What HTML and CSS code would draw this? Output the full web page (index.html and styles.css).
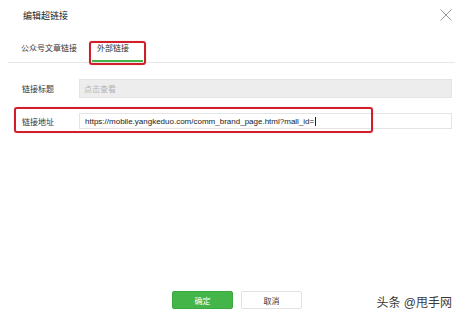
FILE: index.html
```html
<!DOCTYPE html>
<html lang="zh-CN">
<head>
  <meta charset="UTF-8">
  <meta name="viewport" content="width=device-width, initial-scale=1.0">
  <title>编辑超链接</title>
  <link rel="stylesheet" href="styles.css">
</head>
<body>
  <div class="dialog">
    <div class="dialog-hd">
      <h3 class="dialog-title">编辑超链接</h3>
      <button class="close-btn" aria-label="关闭">
        <svg width="12" height="12" viewBox="0 0 12 12">
          <path d="M0.5 0.5 L11.5 11.5 M11.5 0.5 L0.5 11.5" stroke="#9a9a9a" stroke-width="1" fill="none"/>
        </svg>
      </button>
    </div>

    <div class="tabs">
      <div class="tab">公众号文章链接</div>
      <div class="tab active">
        外部链接
        <span class="mark mark-tab"></span>
      </div>
    </div>

    <div class="form">
      <div class="form-row">
        <label class="form-label">链接标题</label>
        <div class="form-input disabled">点击查看</div>
      </div>
      <div class="form-row">
        <label class="form-label">链接地址</label>
        <div class="form-input url">https://mobile.yangkeduo.com/comm_brand_page.html?mall_id=<span class="caret"></span></div>
        <span class="mark mark-row"></span>
      </div>
    </div>

    <div class="dialog-ft">
      <button class="btn btn-primary">确定</button>
      <button class="btn btn-default">取消</button>
    </div>

    <div class="watermark">头条 @甩手网</div>
  </div>
</body>
</html>
```

FILE: styles.css
```css
body {
  margin: 0;
  background: #fff;
  font-family: "Liberation Sans", "Noto Sans CJK SC", sans-serif;
  color: #353535;
}

.dialog {
  position: relative;
  height: 319px;
  display: flex;
  flex-direction: column;
}

.dialog-hd {
  display: flex;
  justify-content: space-between;
  align-items: center;
  height: 30px;
  padding: 0 11px 0 23px;
}

.dialog-title {
  margin: 0;
  font-size: 9px;
  font-weight: normal;
  color: #222;
}

.close-btn {
  border: none;
  background: none;
  padding: 0;
  width: 12px;
  height: 12px;
  display: flex;
}

.tabs {
  display: flex;
  margin: 0 8px;
  height: 32px;
  border-bottom: 1px solid #e8e8e8;
}

.tab {
  position: relative;
  padding: 13px 5px 5px;
  line-height: 12px;
  font-size: 8px;
  color: #353535;
  border-bottom: 2px solid transparent;
}

.tab:first-child {
  margin-left: 8px;
  margin-right: 10px;
}

.tab.active {
  width: 41px;
  border-bottom-color: #44b549;
}

/* red annotation boxes */
.mark {
  position: absolute;
  border: 2px solid #d11f2a;
  border-radius: 3px;
  box-shadow: 0 0 1px rgba(209, 31, 42, 0.5);
  pointer-events: none;
}

.mark-tab {
  left: -3px;
  top: 11px;
  width: 53px;
  height: 20px;
}

.form {
  padding: 16px 11px 0 22px;
  display: flex;
  flex-direction: column;
  gap: 15px;
}

.form-row {
  position: relative;
  display: flex;
  align-items: center;
}

.form-label {
  width: 57px;
  font-size: 8px;
  color: #353535;
}

.form-input {
  flex: 1;
  box-sizing: border-box;
  display: flex;
  align-items: center;
  padding: 0 5px;
  font-size: 8px;
  border: 1px solid #e4e4e4;
}

.form-input.disabled {
  height: 19px;
  padding-left: 4px;
  background: #ededed;
  color: #b4b4b4;
}

.form-input.url {
  height: 16px;
  background: #fff;
  color: #222;
}

.caret {
  display: inline-block;
  width: 1px;
  height: 9px;
  margin-left: 1px;
  background: #222;
}

.mark-row {
  left: -8px;
  top: -6px;
  width: 355px;
  height: 22px;
}

.dialog-ft {
  margin-top: auto;
  display: flex;
  justify-content: center;
  gap: 8px;
  padding: 0 0 10px 11px;
}

.btn {
  width: 61px;
  height: 18px;
  border-radius: 2px;
  font-family: inherit;
  font-size: 8px;
  padding: 0;
}

.btn-primary {
  background: #44b549;
  border: 1px solid #3da742;
  color: #fff;
}

.btn-default {
  background: #fff;
  border: 1px solid #e2e2e2;
  color: #353535;
}

.watermark {
  position: absolute;
  right: 11px;
  bottom: 9px;
  font-size: 12px;
  color: #3a3a3a;
}
```
